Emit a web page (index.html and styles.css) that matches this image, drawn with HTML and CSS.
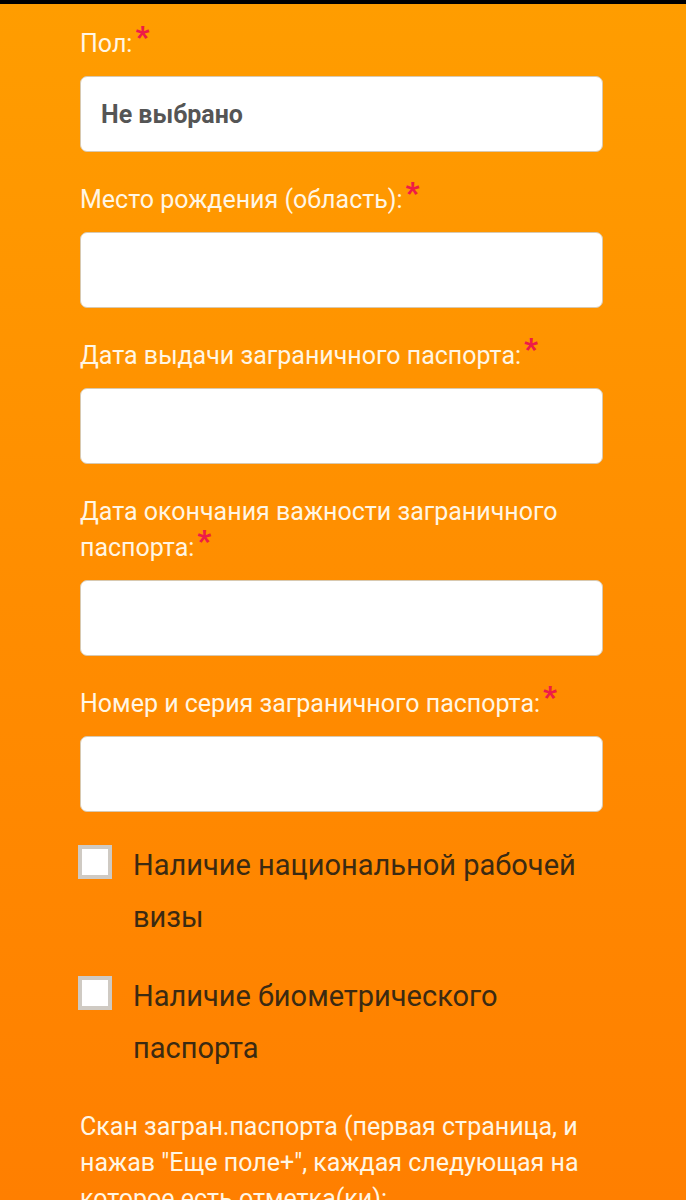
FILE: index.html
```html
<!DOCTYPE html>
<html lang="ru">
<head>
<meta charset="utf-8">
<title>Анкета</title>
<link rel="stylesheet" href="styles.css">
</head>
<body>
<div class="topbar"></div>
<main class="form">
  <div class="field">
    <label class="label">Пол:<span class="req">*</span></label>
    <div class="input select">Не выбрано</div>
  </div>
  <div class="field">
    <label class="label">Место рождения (область):<span class="req">*</span></label>
    <div class="input"></div>
  </div>
  <div class="field">
    <label class="label">Дата выдачи заграничного паспорта:<span class="req">*</span></label>
    <div class="input"></div>
  </div>
  <div class="field">
    <label class="label">Дата окончания важности заграничного паспорта:<span class="req">*</span></label>
    <div class="input"></div>
  </div>
  <div class="field">
    <label class="label">Номер и серия заграничного паспорта:<span class="req">*</span></label>
    <div class="input"></div>
  </div>
  <div class="check">
    <span class="box"></span>
    <span class="check-text">Наличие национальной рабочей визы</span>
  </div>
  <div class="check">
    <span class="box"></span>
    <span class="check-text">Наличие биометрического паспорта</span>
  </div>
  <p class="note">Скан загран.паспорта (первая страница, и нажав "Еще поле+", каждая следующая на которое есть отметка(ки):</p>
</main>
</body>
</html>
```
FILE: styles.css
```css
html, body {
  margin: 0;
  padding: 0;
}
body {
  height: 1200px;
  background: linear-gradient(180deg, #ff9d00 0%, #ff8d00 50%, #ff7f00 100%);
  font-family: Roboto, "Noto Sans", "Liberation Sans", sans-serif;
  overflow: hidden;
}
.topbar {
  height: 4px;
  background: #000;
}
.form {
  width: 523px;
  margin: 0 0 0 80px;
  padding-top: 22px;
}
.field {
  margin-bottom: 30px;
}
.label {
  display: block;
  color: #fff6e4;
  font-size: 25px;
  line-height: 36px;
  margin-bottom: 14px;
}
.req {
  color: #ee1c47;
  font-weight: 900;
  font-size: 30px;
  line-height: 0;
  position: relative;
  top: -5px;
  margin-left: 3px;
}
.input {
  box-sizing: border-box;
  height: 76px;
  background: #fff;
  border: 1px solid #d8c9b0;
  border-radius: 7px;
}
.select {
  padding-left: 20px;
  display: flex;
  align-items: center;
  font-weight: 700;
  font-size: 25px;
  color: #555;
}
.check {
  display: flex;
  align-items: flex-start;
  margin-bottom: 30px;
}
.box {
  flex: none;
  box-sizing: border-box;
  width: 34px;
  height: 34px;
  margin-top: 3px;
  margin-left: -2px;
  background: #fff;
  border: 4px solid #cfcac3;
}
.check-text {
  margin-left: 21px;
  font-size: 29px;
  line-height: 52px;
  color: #3b2a12;
  margin-top: -3px;
  max-width: 470px;
}
.note {
  margin: 0;
  padding-top: 5px;
  color: #fff6e4;
  font-size: 25px;
  line-height: 36px;
}
```
